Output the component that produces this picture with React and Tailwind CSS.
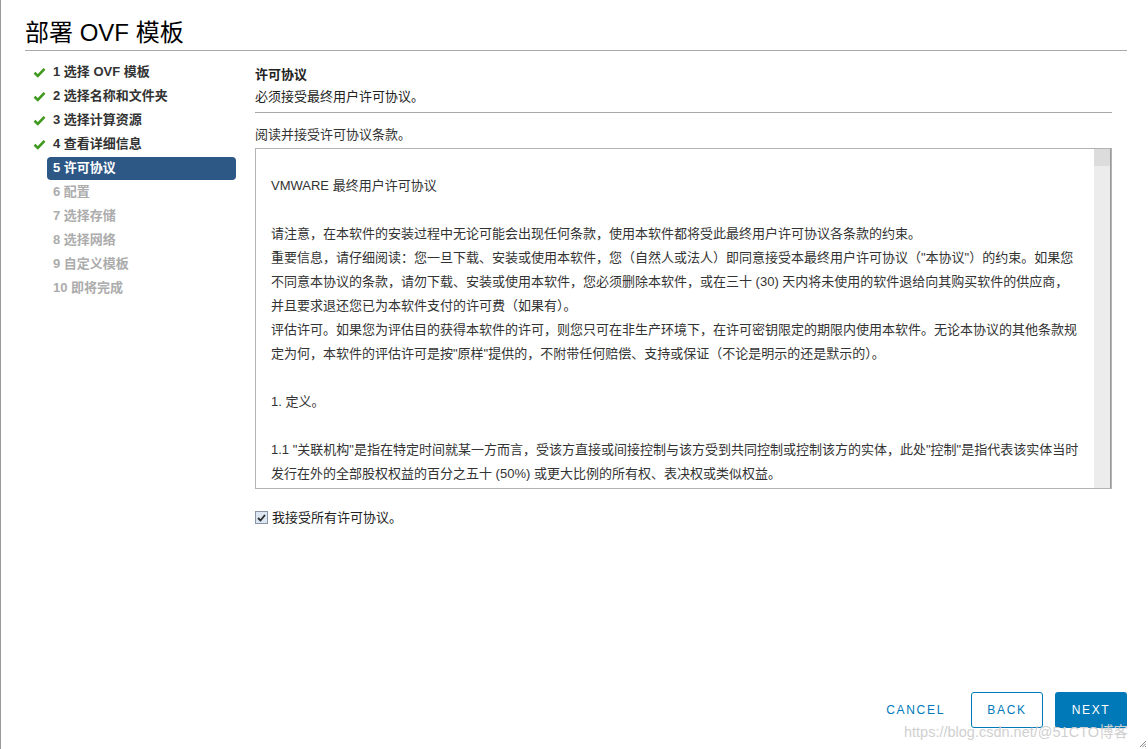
import React from "react";

const FONT = { fontFamily: '"Liberation Sans", "Noto Sans CJK SC", sans-serif' };

const STEPS = [
  { label: "1 选择 OVF 模板", state: "done" },
  { label: "2 选择名称和文件夹", state: "done" },
  { label: "3 选择计算资源", state: "done" },
  { label: "4 查看详细信息", state: "done" },
  { label: "5 许可协议", state: "active" },
  { label: "6 配置", state: "todo" },
  { label: "7 选择存储", state: "todo" },
  { label: "8 选择网络", state: "todo" },
  { label: "9 自定义模板", state: "todo" },
  { label: "10 即将完成", state: "todo" },
];

// null = blank line
const EULA = [
  "VMWARE 最终用户许可协议",
  null,
  "请注意，在本软件的安装过程中无论可能会出现任何条款，使用本软件都将受此最终用户许可协议各条款的约束。",
  "重要信息，请仔细阅读：您一旦下载、安装或使用本软件，您（自然人或法人）即同意接受本最终用户许可协议（\"本协议\"）的约束。如果您",
  "不同意本协议的条款，请勿下载、安装或使用本软件，您必须删除本软件，或在三十 (30) 天内将未使用的软件退给向其购买软件的供应商，",
  "并且要求退还您已为本软件支付的许可费（如果有）。",
  "评估许可。如果您为评估目的获得本软件的许可，则您只可在非生产环境下，在许可密钥限定的期限内使用本软件。无论本协议的其他条款规",
  "定为何，本软件的评估许可是按\"原样\"提供的，不附带任何赔偿、支持或保证（不论是明示的还是默示的）。",
  null,
  "1. 定义。",
  null,
  "1.1 \"关联机构\"是指在特定时间就某一方而言，受该方直接或间接控制与该方受到共同控制或控制该方的实体，此处\"控制\"是指代表该实体当时",
  "发行在外的全部股权权益的百分之五十 (50%) 或更大比例的所有权、表决权或类似权益。",
];

const Check = () => (
  <svg width="13" height="11" viewBox="0 0 13 11">
    <path d="M1.5 5.8 L4.8 9 L11.5 1.8" fill="none" stroke="#3f9a1f" strokeWidth="2.6" />
  </svg>
);

const Step = ({ step }) => {
  const active = step.state === "active";
  const done = step.state === "done";
  return (
    <div className="flex h-6 items-center">
      <div className="flex w-[22px] justify-start pl-[8px]">{done && <Check />}</div>
      <div
        className={
          active
            ? "flex h-[23px] w-[189px] items-center rounded-[4px] bg-[#2d5785] px-[6px] text-[13px] font-bold text-white"
            : done
            ? "flex h-[23px] w-[189px] items-center px-[6px] text-[13px] font-bold text-[#333]"
            : "flex h-[23px] w-[189px] items-center px-[6px] text-[13px] font-bold text-[#acacac]"
        }
      >
        {step.label}
      </div>
    </div>
  );
};

export default function App() {
  return (
    <div
      className="relative flex h-[749px] w-[1148px] flex-col overflow-hidden border-l border-[#999] bg-white"
      style={FONT}
    >
      <div className="ml-[24px] mr-[21px] h-[51px] border-b border-[#a8a8a8] pt-[17px]">
        <h1 className="text-[24px] leading-[32px] text-black">部署 OVF 模板</h1>
      </div>

      <div className="ml-[24px] flex flex-1">
        <div className="w-[230px] pt-[9px]">
          {STEPS.map((s) => (
            <Step key={s.label} step={s} />
          ))}
        </div>

        <div className="w-[857px]">
          <div className="pt-[14px] text-[13px] leading-[20px] text-[#222]">
            <div className="font-bold">许可协议</div>
            <div className="mt-[2px]">必须接受最终用户许可协议。</div>
          </div>
          <div className="mt-[5px] border-b border-[#a8a8a8]" />
          <div className="mt-[12px] text-[13px] leading-[20px] text-[#333]">阅读并接受许可协议条款。</div>
          <div className="mt-[3px] flex h-[341px] border border-[#b3b3b3]">
            <div className="flex-1 overflow-hidden pl-[15px] pt-[25px] text-[13px] leading-[24px] text-[#333]">
              {EULA.map((line, i) =>
                line === null ? (
                  <div key={i} className="h-[24px]" />
                ) : (
                  <div key={i} className="whitespace-nowrap">
                    {line}
                  </div>
                )
              )}
            </div>
            <div className="flex w-[17px] flex-col border-r border-[#9a9a9a] bg-[#ececec]">
              <div className="h-[17px] bg-[#dcdcdc]" />
            </div>
          </div>
          <label className="mt-[19px] flex items-center gap-[4px] text-[13px] text-[#222]">
            <span className="flex h-[13px] w-[13px] items-center justify-center border border-[#8b96a5] bg-[#dce7f3]">
              <svg width="9" height="8" viewBox="0 0 9 8">
                <path d="M1 4 L3.5 6.5 L8 1" fill="none" stroke="#2a2a2a" strokeWidth="1.8" />
              </svg>
            </span>
            我接受所有许可协议。
          </label>
        </div>
      </div>

      <div className="mb-[21px] mr-[21px] flex justify-end gap-[12px]">
        <button className="mr-[2px] h-[36px] px-[12px] text-[12px] tracking-[0.14em] text-[#0079b8]">CANCEL</button>
        <button className="h-[36px] w-[72px] rounded-[3px] border border-[#0079b8] text-[12px] tracking-[0.14em] text-[#0079b8]">
          BACK
        </button>
        <button className="h-[36px] w-[72px] rounded-[3px] bg-[#0079b8] text-[12px] tracking-[0.14em] text-white">
          NEXT
        </button>
      </div>

      <div className="absolute bottom-[5px] right-[20px] text-[14.5px] text-[#d0d0d0]">https://blog.csdn.net/@51CTO博客</div>
      <svg className="absolute bottom-[2px] right-[2px]" width="7" height="7" viewBox="0 0 7 7">
        <path d="M1 7 L7 1 M3.5 7 L7 3.5 M6 7 L7 6" stroke="#888" strokeWidth="1" />
      </svg>
    </div>
  );
}
